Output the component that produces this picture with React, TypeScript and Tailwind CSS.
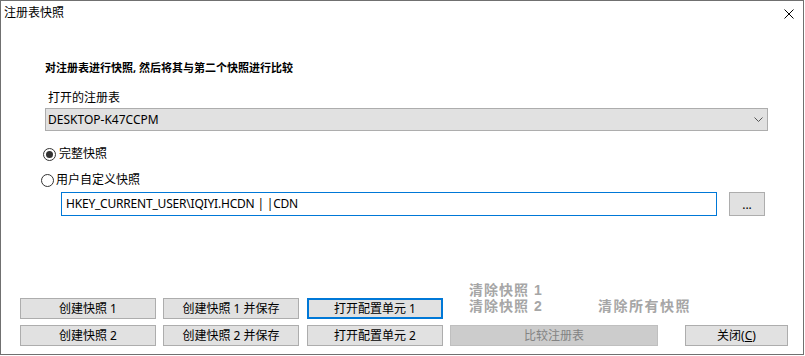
import React from "react";

function Btn({
  children,
  className = "",
  focused = false,
  disabled = false,
}: {
  children: React.ReactNode;
  className?: string;
  focused?: boolean;
  disabled?: boolean;
}) {
  const base =
    "h-[21px] flex items-center justify-center text-[12px] leading-[16px] shrink-0";
  const look = disabled
    ? "bg-[#cccccc] border border-[#bfbfbf] text-[#838383]"
    : focused
    ? "bg-[#e1e1e1] border-2 border-[#0078d7] text-black"
    : "bg-[#e1e1e1] border border-[#adadad] text-black";
  return <div className={`${base} ${look} ${className}`}>{children}</div>;
}

function Radio({ checked }: { checked: boolean }) {
  return (
    <div className="w-[13px] h-[13px] rounded-full border border-[#333333] bg-white flex items-center justify-center shrink-0">
      {checked && <div className="w-[7px] h-[7px] rounded-full bg-[#333333]" />}
    </div>
  );
}

export default function App() {
  return (
    <div className="w-[805px] h-[356px] bg-white font-['Noto_Sans','Noto_Sans_CJK_SC',sans-serif] text-black">
      <div className="w-[804px] h-[355px] border border-[#707070] flex flex-col">
        {/* title bar */}
        <div className="h-[29px] flex justify-between items-start shrink-0">
          <span className="ml-[3px] mt-[4px] text-[12px] leading-[16px]">注册表快照</span>
          <svg className="mt-[8px] mr-[9px]" width="10" height="10" viewBox="0 0 10 10">
            <path d="M0.5 0.5 L9.5 9.5 M9.5 0.5 L0.5 9.5" stroke="#000" strokeWidth="1" fill="none" />
          </svg>
        </div>

        {/* content */}
        <div className="pl-[39px] flex flex-col">
          <div className="ml-[5px] mt-[30px] text-[11px] leading-[15px] font-bold">
            对注册表进行快照, 然后将其与第二个快照进行比较
          </div>
          <div className="ml-[8px] mt-[15px] text-[12px] leading-[16px]">打开的注册表</div>
          <div className="ml-[5px] mt-[2px] w-[723px] h-[23px] bg-[#e1e1e1] border border-[#adadad] flex items-center justify-between">
            <span className="pl-[2px] text-[12px] leading-[16px]">DESKTOP-K47CCPM</span>
            <svg className="mr-[4px]" width="9" height="5" viewBox="0 0 9 5">
              <path d="M0.5 0.5 L4.5 4.5 L8.5 0.5" stroke="#555" strokeWidth="1" fill="none" />
            </svg>
          </div>

          <div className="ml-[3px] mt-[15px] h-[16px] flex items-center gap-[3px]">
            <Radio checked />
            <span className="text-[12px] leading-[16px]">完整快照</span>
          </div>
          <div className="ml-[1px] mt-[10px] h-[16px] flex items-center gap-[2px]">
            <Radio checked={false} />
            <span className="text-[12px] leading-[16px]">用户自定义快照</span>
          </div>

          <div className="ml-[21px] mt-[4px] flex items-center">
            <div className="w-[656px] h-[24px] border border-[#0078d7] bg-white flex items-center pl-[4px] text-[12px] tracking-[-0.2px] leading-[16px]">
              {"HKEY_CURRENT_USER\\IQIYI.HCDN | |CDN"}
            </div>
            <div className="ml-[12px] w-[36px] h-[24px] bg-[#e1e1e1] border border-[#adadad] flex items-center justify-center text-[12px] leading-[16px] pt-[2px]">
              ...
            </div>
          </div>
        </div>

        {/* bottom buttons */}
        <div className="mt-auto pb-[8px] pl-[19px] flex flex-col gap-[6px]">
          <div className="flex items-end">
            <Btn className="w-[136px]">创建快照 1</Btn>
            <Btn className="w-[136px] ml-[7px]">创建快照 1 并保存</Btn>
            <Btn className="w-[136px] ml-[8px]" focused>
              打开配置单元 1
            </Btn>
            <div className="ml-[26px] w-[129px] mb-[5px] font-['Liberation_Sans','Noto_Sans_CJK_SC',sans-serif] text-[14px] tracking-[1px] leading-[16px] font-bold text-[#a6a6a6] flex flex-col">
              <span>清除快照 1</span>
              <span>清除快照 2</span>
            </div>
            <div className="mb-[5px] font-['Liberation_Sans','Noto_Sans_CJK_SC',sans-serif] text-[14px] tracking-[1.5px] leading-[16px] font-bold text-[#a6a6a6]">
              清除所有快照
            </div>
          </div>
          <div className="flex items-end">
            <Btn className="w-[136px]">创建快照 2</Btn>
            <Btn className="w-[136px] ml-[7px]">创建快照 2 并保存</Btn>
            <Btn className="w-[136px] ml-[8px]">打开配置单元 2</Btn>
            <Btn className="w-[208px] ml-[7px]" disabled>
              比较注册表
            </Btn>
            <Btn className="w-[103px] ml-[27px]">
              关闭(<span className="underline">C</span>)
            </Btn>
          </div>
        </div>
      </div>
    </div>
  );
}
